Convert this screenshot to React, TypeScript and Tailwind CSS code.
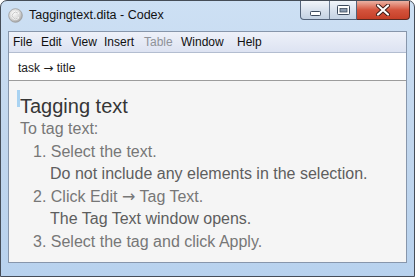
import React from "react";

function AppIcon() {
  return (
    <svg width="15" height="15" viewBox="0 0 15 15">
      <defs>
        <radialGradient id="ig" cx="40%" cy="35%" r="70%">
          <stop offset="0%" stopColor="#fafafa" />
          <stop offset="60%" stopColor="#d6d6d6" />
          <stop offset="100%" stopColor="#9c9c9c" />
        </radialGradient>
      </defs>
      <circle cx="7.5" cy="7.5" r="6.8" fill="url(#ig)" stroke="#9a9a9a" strokeWidth="0.8" />
      <path d="M10 5.2 A3.3 3.3 0 1 0 10 9.8" fill="none" stroke="#ffffff" strokeWidth="1.8" strokeLinecap="round" />
      <path d="M10 5.2 A3.3 3.3 0 1 0 10 9.8" fill="none" stroke="#8d8d8d" strokeWidth="0.5" />
    </svg>
  );
}

function CaptionButtons() {
  return (
    <div className="flex self-start mr-[4px] h-[19px]">
      <div className="flex border border-t-0 border-[#53637a] rounded-bl-[4px] overflow-hidden bg-gradient-to-b from-[#f1f5fa] via-[#d9e2ee] to-[#c4d2e3]">
        <div className="w-[29px] h-full flex items-end justify-center pb-[3px] border-r border-[#6a7a90]">
          <svg width="11" height="5" viewBox="0 0 11 5">
            <rect x="0.5" y="0.5" width="10" height="4" rx="0.8" fill="#ffffff" stroke="#3d4b5e" strokeWidth="1" />
          </svg>
        </div>
        <div className="w-[26px] h-full flex items-center justify-center">
          <svg width="13" height="10" viewBox="0 0 13 10">
            <rect x="0.5" y="0.5" width="12" height="9" rx="0.8" fill="#ffffff" stroke="#3d4b5e" strokeWidth="1" />
            <rect x="3" y="3.5" width="7" height="3.5" fill="#8b9bb0" stroke="#3d4b5e" strokeWidth="0.8" />
          </svg>
        </div>
      </div>
      <div className="w-[53px] h-full flex items-center justify-center border border-t-0 border-l-0 border-[#5b2a22] rounded-br-[4px] bg-gradient-to-b from-[#eab1a3] via-[#d4533c] to-[#c63f27]">
        <svg width="16" height="12" viewBox="0 0 16 12">
          <path d="M3 1.5 L13 10.5 M13 1.5 L3 10.5" stroke="#3b1a16" strokeWidth="4" strokeLinecap="round" />
          <path d="M3 1.5 L13 10.5 M13 1.5 L3 10.5" stroke="#ffffff" strokeWidth="2.2" strokeLinecap="round" />
        </svg>
      </div>
    </div>
  );
}

function Arrow() {
  return <span style={{ fontFamily: '"DejaVu Sans", sans-serif' }}>→</span>;
}

export default function App() {
  const font = { fontFamily: '"Liberation Sans", Arial, sans-serif' };
  return (
    <div className="w-[415px] h-[277px] overflow-hidden bg-white" style={font}>
      <div className="w-full h-full flex flex-col border border-[#454d58] rounded-t-[7px] bg-gradient-to-b from-[#cde0f4] via-[#c1d6ed] to-[#b8d2ee]">
        {/* Title bar */}
        <div className="h-[30px] flex items-start shrink-0">
          <div className="pl-[7px] pt-[7px]">
            <AppIcon />
          </div>
          <div className="pl-[6px] pt-[6px] text-[12.5px] text-[#111] leading-[16px]">
            Taggingtext.dita - Codex
          </div>
          <div className="flex-1" />
          <CaptionButtons />
        </div>
        {/* Client */}
        <div className="flex-1 mx-[7px] mb-[13px] flex flex-col border border-[#8796ab] bg-white">
          {/* Menu bar */}
          <div className="h-[21px] shrink-0 flex items-center pl-[4px] text-[12px] text-[#101010] border-b border-[#b3bdd0] bg-gradient-to-b from-[#eef1f9] to-[#dde3f2]">
            <span className="w-[28px]">File</span>
            <span className="w-[30px]">Edit</span>
            <span className="w-[33px]">View</span>
            <span className="w-[40px]">Insert</span>
            <span className="w-[37px] text-[#8e9299]">Table</span>
            <span className="w-[56px]">Window</span>
            <span>Help</span>
          </div>
          {/* Breadcrumb */}
          <div className="h-[28px] shrink-0 flex items-center pl-[9px] pt-[2px] text-[12px] text-[#1b1b1b] border-b border-[#9c9c9c] bg-white">
            <span>
              task <Arrow /> title
            </span>
          </div>
          {/* Content */}
          <div className="flex-1 bg-[#f5f5f5] pl-[11px] pt-[13px] text-[16px] text-[#777777]">
            <div className="relative text-[20px] leading-[24px] text-[#363636]">
              <span className="absolute left-[-3px] top-[-4px] w-[3px] h-[17px] bg-[#a9d3f2]" />
              Tagging text
            </div>
            <div className="leading-[22.5px]">To tag text:</div>
            <div className="leading-[22.5px] ml-[13px]">1. Select the text.</div>
            <div className="leading-[22.5px] ml-[30px] text-[#5e5e5e]">Do not include any elements in the selection.</div>
            <div className="leading-[22.5px] ml-[13px]">
              2. Click Edit <Arrow /> Tag Text.
            </div>
            <div className="leading-[22.5px] ml-[30px] text-[#5e5e5e]">The Tag Text window opens.</div>
            <div className="leading-[22.5px] ml-[13px]">3. Select the tag and click Apply.</div>
          </div>
        </div>
      </div>
    </div>
  );
}
